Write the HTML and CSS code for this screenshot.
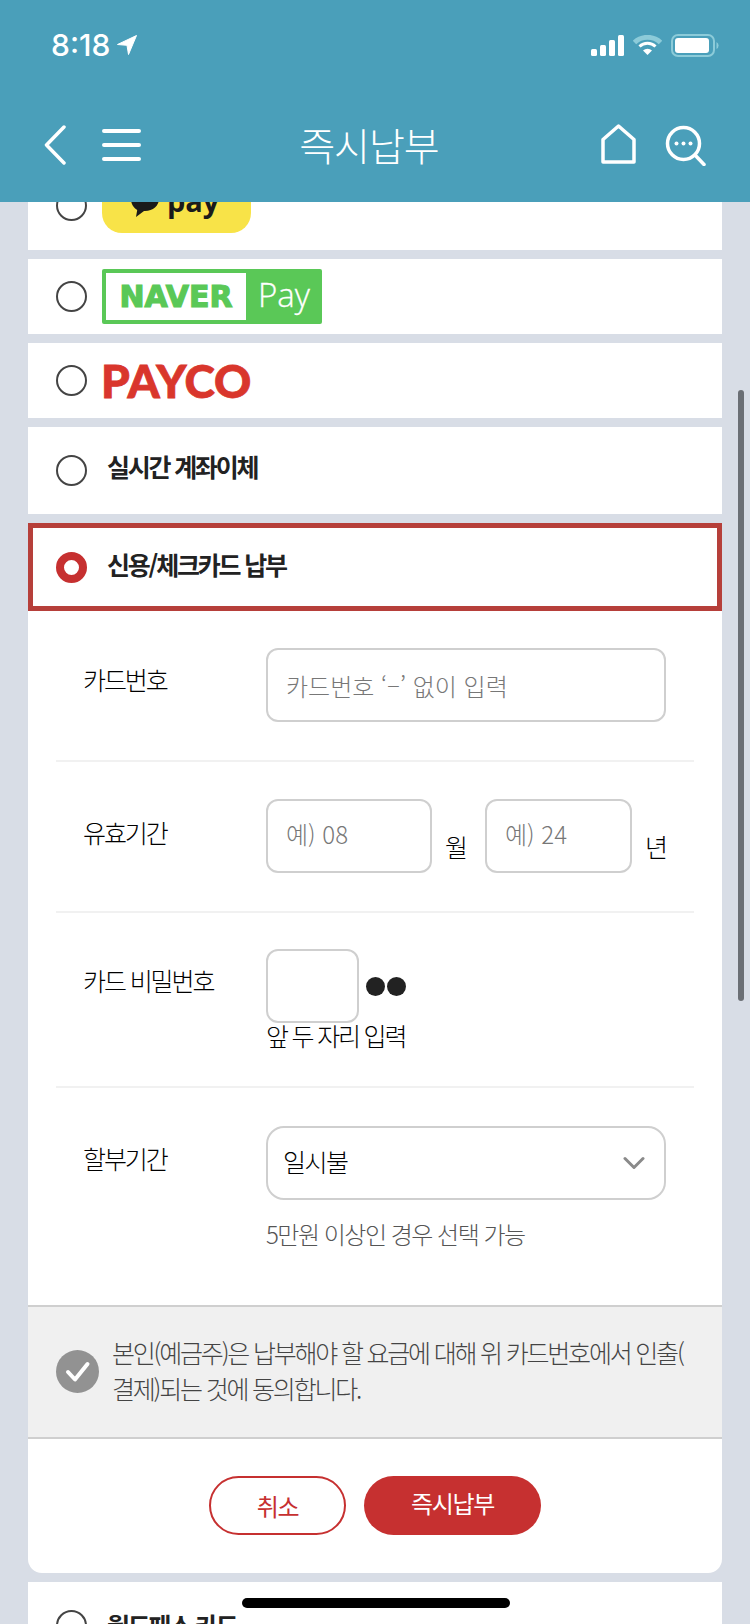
FILE: index.html
```html
<!DOCTYPE html>
<html lang="ko">
<head>
<meta charset="utf-8">
<title>즉시납부</title>
<link rel="stylesheet" href="styles.css">
</head>
<body>
<div class="phone">
  <header class="header">
    <div class="status">
      <div class="status-left">
        <span class="time">8:18</span>
        <svg class="loc" width="20" height="20" viewBox="0 0 20 20"><path d="M19.500 .5 .5 9.500l9.500 .8L11.500 19.500z" fill="#fff" stroke="#fff" stroke-width="1" stroke-linejoin="round"/></svg>
      </div>
      <div class="status-right">
        <svg width="33" height="21" viewBox="0 0 33 21"><g fill="#fff"><rect x="0" y="14" width="6" height="7" rx="1.500"/><rect x="9" y="10" width="6" height="11" rx="1.500"/><rect x="18" y="5" width="6" height="16" rx="1.500"/><rect x="27" y="0" width="6" height="21" rx="1.500"/></g></svg>
        <svg width="29" height="21" viewBox="0 0 29 21"><path d="M1.500 7.500a19 19 0 0 1 26 0" fill="none" stroke="#8ccbd9" stroke-width="5"/><path d="M6.500 11.500a11.500 11.500 0 0 1 16 0" fill="none" stroke="#fff" stroke-width="3"/><path d="M10 15.500a6.500 6.500 0 0 1 9 0l-4.500 4.500z" fill="#fff"/></svg>
        <svg width="48" height="23" viewBox="0 0 48 23"><rect x="1" y="1" width="42" height="21" rx="6" fill="none" stroke="#8ccbd9" stroke-width="2"/><rect x="4" y="4" width="34" height="15" rx="3" fill="#fff"/><path d="M45.500 8a4 4 0 0 1 0 7z" fill="#8ccbd9"/></svg>
      </div>
    </div>
    <nav class="nav">
      <div class="nav-left">
        <svg width="22" height="40" viewBox="0 0 22 40"><path d="M20 2 2.500 20 20 38" fill="none" stroke="#fff" stroke-width="3.500" stroke-linecap="round" stroke-linejoin="round"/></svg>
        <svg class="menu" width="40" height="34" viewBox="0 0 40 34"><path d="M2 3h35M2 17h35M2 31h35" fill="none" stroke="#fff" stroke-width="4" stroke-linecap="round"/></svg>
      </div>
      <h1 class="title">즉시납부</h1>
      <div class="nav-right">
        <svg class="home" width="35" height="40" viewBox="0 0 35 40"><path d="M2 38V15.500L17.500 2 33 15.500V38z" fill="none" stroke="#fff" stroke-width="3.500" stroke-linejoin="round"/></svg>
        <svg class="search" width="41" height="41" viewBox="0 0 41 41"><circle cx="18.500" cy="18.500" r="16" fill="none" stroke="#fff" stroke-width="3.500"/><path d="M30 30 39 39.500" stroke="#fff" stroke-width="3.500" stroke-linecap="round"/><g fill="#fff"><circle cx="11.500" cy="18.500" r="2"/><circle cx="18.500" cy="18.500" r="2"/><circle cx="25.500" cy="18.500" r="2"/></g></svg>
      </div>
    </nav>
  </header>

  <main class="list">
    <div class="row row-kakao">
      <span class="radio"></span>
      <div class="kakao">
        <svg width="30" height="33" viewBox="0 0 30 33"><path d="M15 1C7 1 1 6.500 1 14c0 4.800 2.500 8.800 6.200 11L6 32l8-6.100c.3 0 .7 .1 1 .1 8 0 14-5.500 14-12S23 1 15 1z" fill="#1a1a1a"/></svg>
        <span class="kakao-text">pay</span>
      </div>
    </div>
    <div class="row row-logo">
      <span class="radio"></span>
      <div class="naver">
        <span class="naver-box">NAVER</span>
        <span class="naver-pay">Pay</span>
      </div>
    </div>
    <div class="row row-logo">
      <span class="radio"></span>
      <span class="payco">PAYCO</span>
    </div>
    <div class="row row-text">
      <span class="radio"></span>
      <span class="row-label">실시간 계좌이체</span>
    </div>
    <div class="row row-selected">
      <span class="radio radio-on"></span>
      <span class="row-label">신용/체크카드 납부</span>
    </div>

    <section class="panel">
      <div class="fields">
        <div class="field field-number">
          <span class="field-label">카드번호</span>
          <div class="input input-full"><span class="ph">카드번호 ‘–’ 없이 입력</span></div>
        </div>
        <div class="field field-date">
          <span class="field-label">유효기간</span>
          <div class="date-group">
            <div class="input input-month"><span class="ph">예) 08</span></div>
            <span class="unit">월</span>
            <div class="input input-year"><span class="ph">예) 24</span></div>
            <span class="unit">년</span>
          </div>
        </div>
        <div class="field field-cvc">
          <span class="field-label">카드 비밀번호</span>
          <div class="cvc-group">
            <div class="cvc-line">
              <div class="input input-cvc"></div>
              <span class="dots"><i></i><i></i></span>
            </div>
            <span class="cvc-note">앞 두 자리 입력</span>
          </div>
        </div>
        <div class="field field-plan">
          <span class="field-label">할부기간</span>
          <div class="plan-group">
            <div class="select">
              <span class="select-value">일시불</span>
              <svg width="22" height="14" viewBox="0 0 22 14"><path d="M2 2.500 11 11.500 20 2.500" fill="none" stroke="#8a8a8a" stroke-width="3" stroke-linecap="round" stroke-linejoin="round"/></svg>
            </div>
            <p class="hint">5만원 이상인 경우 선택 가능</p>
          </div>
        </div>
      </div>

      <div class="agree">
        <span class="check"><svg width="43" height="43" viewBox="0 0 43 43"><circle cx="21.500" cy="21.500" r="21.500" fill="#929292"/><path d="M12 22l7 7.500L31.500 14" fill="none" stroke="#fff" stroke-width="4" stroke-linecap="round" stroke-linejoin="round"/></svg></span>
        <p class="agree-text">본인(예금주)은 납부해야 할 요금에 대해 위 카드번호에서 인출(<br>결제)되는 것에 동의합니다.</p>
      </div>

      <div class="actions">
        <button class="btn btn-ghost">취소</button>
        <button class="btn btn-solid">즉시납부</button>
      </div>
    </section>

    <div class="row row-last">
      <span class="radio"></span>
      <span class="row-label">월드패스 카드</span>
    </div>
  </main>

  <div class="scrollbar"></div>
  <div class="home-bar"></div>
</div>
</body>
</html>
```
FILE: styles.css
```css
* { box-sizing: border-box; }
html, body { margin: 0; padding: 0; }
body {
  width: 750px;
  height: 1624px;
  overflow: hidden;
  background: #d8dde6;
  font-family: "Noto Sans CJK KR", "Noto Sans", sans-serif;
  color: #222;
}
.phone { position: relative; width: 750px; height: 1624px; overflow: hidden; }

.header {
  position: relative;
  z-index: 2;
  height: 202px;
  background: #4a9fba;
  color: #fff;
}
.status {
  display: flex;
  justify-content: space-between;
  align-items: center;
  height: 90px;
  padding: 0 31px 0 51px;
}
.status-left { display: flex; align-items: center; gap: 7px; }
.time { font-family: "Inter", sans-serif; font-size: 30px; font-weight: 500; line-height: 30px; letter-spacing: 0; }
.status-right { display: flex; align-items: center; gap: 9px; }
.nav {
  position: relative;
  display: flex;
  justify-content: space-between;
  align-items: center;
  height: 112px;
  padding: 0 44px 2px 44px;
}
.nav-left { display: flex; align-items: center; gap: 36px; }
.nav-right { display: flex; align-items: center; gap: 29px; }
.home { margin-bottom: 3px; }
.title {
  position: absolute;
  left: 0;
  right: 12px;
  top: 31px;
  margin: 0;
  text-align: center;
  font-size: 39px;
  font-weight: 300;
  line-height: 46px;
  letter-spacing: -1px;
}

.list { display: flex; flex-direction: column; gap: 9px; margin: -27px 28px 0; }
.row { display: flex; align-items: center; background: #fff; padding-left: 28px; flex-shrink: 0; }
.row-kakao { height: 75px; align-items: flex-end; padding-bottom: 17px; }
.row-kakao .radio { margin-bottom: 12px; }
.row-logo { height: 75px; }
.row-text { height: 87px; }
.row-selected { height: 88px; border: 5px solid #b63f3a; padding-left: 23px; }
.row-last { height: 80px; align-items: flex-start; padding-top: 28px; }
.radio {
  width: 31px;
  height: 31px;
  border: 2px solid #444;
  border-radius: 50%;
  background: #fff;
  flex-shrink: 0;
  margin-right: 15px;
}
.radio-on { border: 8px solid #c63030; }
.row-label {
  margin-left: 5px;
  font-size: 25px;
  font-weight: 700;
  letter-spacing: -2.200px;
  line-height: 32px;
  color: #222;
}
.row-text .row-label { margin-bottom: 10px; }
.row-selected .row-label { margin-bottom: 6px; }
.row-last .row-label { margin-top: -1px; }

.kakao {
  display: flex;
  align-items: center;
  gap: 7px;
  width: 149px;
  height: 56px;
  background: #f8e348;
  border-radius: 20px;
  padding: 0 0 8px 28px;
}
.kakao-text { font-family: "Open Sans", sans-serif; font-size: 29px; font-weight: 700; line-height: 32px; color: #1a1a1a; }
.naver {
  display: flex;
  width: 220px;
  height: 55px;
  background: #5ac857;
  border-radius: 2px;
  padding: 4px 0 4px 4px;
}
.naver-box {
  display: flex;
  align-items: center;
  justify-content: center;
  width: 140px;
  background: #fff;
  color: #5ac857;
  font-family: "DejaVu Sans", sans-serif;
  font-size: 30px;
  font-weight: 700;
  letter-spacing: 0;
  -webkit-text-stroke: 1.200px #5ac857;
}
.naver-pay {
  flex: 1;
  text-align: center;
  color: #fff;
  font-family: "Open Sans", sans-serif;
  font-size: 33px;
  font-weight: 300;
  line-height: 44px;
  -webkit-text-stroke: .3px #fff;
}
.payco {
  margin-left: -1px;
  font-family: "Lato", sans-serif;
  font-size: 46px;
  font-weight: 900;
  line-height: 46px;
  color: #d9362c;
  letter-spacing: 0;
  -webkit-text-stroke: .8px #d9362c;
}

.panel {
  display: flex;
  flex-direction: column;
  margin-top: -9px;
  background: #fff;
  border-radius: 0 0 14px 14px;
  height: 962px;
  flex-shrink: 0;
}
.fields { padding: 37px 28px 0; height: 694px; flex-shrink: 0; }
.field { display: flex; border-bottom: 2px solid #f1f1f1; }
.field-label {
  width: 210px;
  flex-shrink: 0;
  padding-left: 27px;
  padding-top: 13px;
  font-size: 25px;
  line-height: 36px;
  font-weight: 300;
  letter-spacing: -2.100px;
  color: #000;
}
.field-number { height: 114px; }
.field-date { height: 151px; padding-top: 37px; }
.field-date .field-label { padding-top: 15px; }
.field-cvc { height: 175px; padding-top: 36px; }
.field-plan { border-bottom: 0; padding-top: 38px; }
.field-plan .field-label { padding-top: 14px; }
.input {
  display: flex;
  align-items: center;
  height: 74px;
  border: 2px solid #cfcfcf;
  border-radius: 12px;
  background: #fff;
  padding-left: 18px;
}
.input-full { width: 400px; }
.ph { font-size: 24px; font-weight: 300; color: #777; letter-spacing: 0; }
.date-group { display: flex; align-items: flex-start; }
.input-month { width: 166px; align-items: flex-start; padding-top: 15px; }
.input-year { width: 147px; align-items: flex-start; padding-top: 15px; }
.unit { width: 53px; font-size: 25px; font-weight: 300; line-height: 30px; padding: 32px 0 0 13px; color: #000; }
.input-year + .unit { width: 34px; }
.cvc-group { display: flex; flex-direction: column; }
.cvc-line { display: flex; align-items: center; gap: 7px; }
.input-cvc { width: 93px; }
.dots { display: flex; gap: 2px; }
.dots i { display: block; width: 19px; height: 19px; border-radius: 50%; background: #222; }
.cvc-note { font-size: 25px; font-weight: 300; letter-spacing: -2.200px; line-height: 24px; color: #000; }
.plan-group { width: 400px; }
.select {
  display: flex;
  align-items: center;
  justify-content: space-between;
  height: 74px;
  border: 2px solid #cfcfcf;
  border-radius: 18px;
  padding: 0 19px 0 15px;
  font-size: 25px;
  font-weight: 300;
  letter-spacing: -1.500px;
  color: #000;
}
.select-value { margin-bottom: 4px; }
.hint { margin: 18px 0 0; font-size: 24px; font-weight: 300; letter-spacing: -1.500px; line-height: 32px; color: #555; }

.agree {
  display: flex;
  align-items: center;
  height: 134px;
  background: #f0f0f0;
  border-top: 2px solid #cfcfcf;
  border-bottom: 2px solid #cfcfcf;
  padding: 0 20px 0 28px;
  flex-shrink: 0;
}
.check { display: block; width: 43px; height: 43px; flex-shrink: 0; margin-right: 13px; margin-top: -1px; }
.agree-text { margin: 0 0 4px; font-size: 25px; font-weight: 300; line-height: 36px; letter-spacing: -2.200px; color: #444; white-space: nowrap; }

.actions { display: flex; justify-content: center; gap: 18px; padding-top: 37px; }
.btn {
  height: 59px;
  border-radius: 30px;
  font-family: inherit;
  font-size: 24px;
  font-weight: 400;
  letter-spacing: -1.300px;
  padding: 0;
}
.btn-ghost { width: 137px; background: #fff; border: 2px solid #c63030; color: #c63030; }
.btn-solid { width: 177px; background: #c63030; border: 0; color: #fff; padding-bottom: 6px; }

.scrollbar {
  position: absolute;
  z-index: 3;
  left: 738px;
  top: 390px;
  width: 6px;
  height: 611px;
  border-radius: 3px;
  background: #6b6f75;
}
.home-bar {
  position: absolute;
  z-index: 3;
  left: 242px;
  top: 1598px;
  width: 268px;
  height: 10px;
  border-radius: 5px;
  background: #000;
}
```
